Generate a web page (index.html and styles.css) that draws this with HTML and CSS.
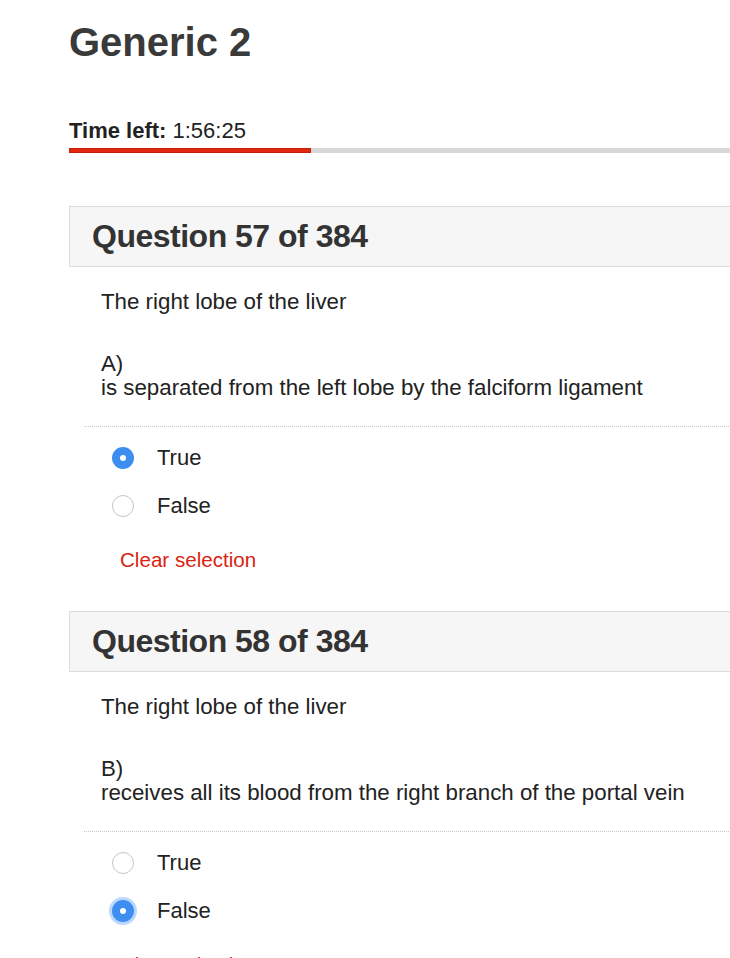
FILE: index.html
```html
<!DOCTYPE html>
<html>
<head>
<meta charset="utf-8">
<link rel="stylesheet" href="styles.css">
</head>
<body>
<div class="page">
  <h1 class="title">Generic 2</h1>
  <div class="timer"><b>Time left:</b> 1:56:25</div>
  <div class="progress"><div class="progress-fill" style="width: 242px"></div></div>

  <section class="question">
    <h2 class="q-head">Question 57 of 384</h2>
    <div class="q-body">
      <p class="stem">The right lobe of the liver</p>
      <p class="item">A)<br>is separated from the left lobe by the falciform ligament</p>
    </div>
    <div class="answers">
      <label class="opt"><span class="radio checked"></span><span>True</span></label>
      <label class="opt"><span class="radio"></span><span>False</span></label>
      <a class="clear">Clear selection</a>
    </div>
  </section>

  <section class="question">
    <h2 class="q-head">Question 58 of 384</h2>
    <div class="q-body">
      <p class="stem">The right lobe of the liver</p>
      <p class="item">B)<br>receives all its blood from the right branch of the portal vein</p>
    </div>
    <div class="answers">
      <label class="opt"><span class="radio"></span><span>True</span></label>
      <label class="opt"><span class="radio checked focus"></span><span>False</span></label>
      <a class="clear">Clear selection</a>
    </div>
  </section>
</div>
</body>
</html>
```

FILE: styles.css
```css
html, body {
  margin: 0;
  padding: 0;
  overflow: hidden;
  background: #fff;
}
body {
  font-family: "Liberation Sans", Arial, sans-serif;
  color: #333;
}
.page {
  margin-left: 69px;
  width: 720px;
}
.title {
  margin: 0;
  padding-top: 19px;
  font-size: 40px;
  line-height: 46px;
  font-weight: bold;
  color: #3a3a3a;
}
.timer {
  margin-top: 54px;
  font-size: 22px;
  line-height: 24px;
  color: #222;
}
.progress {
  margin-top: 5px;
  height: 5px;
  background: #d8d8d8;
}
.progress-fill {
  height: 5px;
  background: #e2290f;
  box-shadow: inset 0 0 0 1px #c41f08;
}
.question {
  margin-top: 53px;
}
.question + .question {
  margin-top: 39px;
}
.q-head {
  margin: 0;
  height: 61px;
  box-sizing: border-box;
  padding-left: 22px;
  background: #f6f6f6;
  border: 1px solid #dcdcdc;
  font-size: 32px;
  letter-spacing: -0.5px;
  line-height: 59px;
  font-weight: bold;
  color: #333;
}
.q-body {
  padding: 23px 0 0 32px;
  font-size: 22.3px;
  line-height: 24px;
  color: #222;
}
.stem, .item {
  margin: 0;
}
.item {
  margin-top: 38px;
}
.answers {
  margin: 26px 0 0 15px;
  border-top: 1px dotted #c8c8c8;
  padding-top: 19px;
}
.opt {
  display: flex;
  align-items: center;
  height: 24px;
  margin-bottom: 24px;
  font-size: 22px;
  color: #222;
}
.radio {
  width: 22px;
  height: 22px;
  border: 1px solid #c6c6c6;
  border-radius: 50%;
  margin: 0 23px 0 28px;
  box-sizing: border-box;
  background: #fff;
}
.radio.checked {
  border: 8px solid #3d8ef0;
  background: #fff;
}
.radio.focus {
  box-shadow: 0 0 0 3px rgba(61, 142, 240, 0.35);
}
.clear {
  display: block;
  margin: 30px 0 0 36px;
  font-size: 20.6px;
  line-height: 24px;
  color: #d9230f;
}
```
